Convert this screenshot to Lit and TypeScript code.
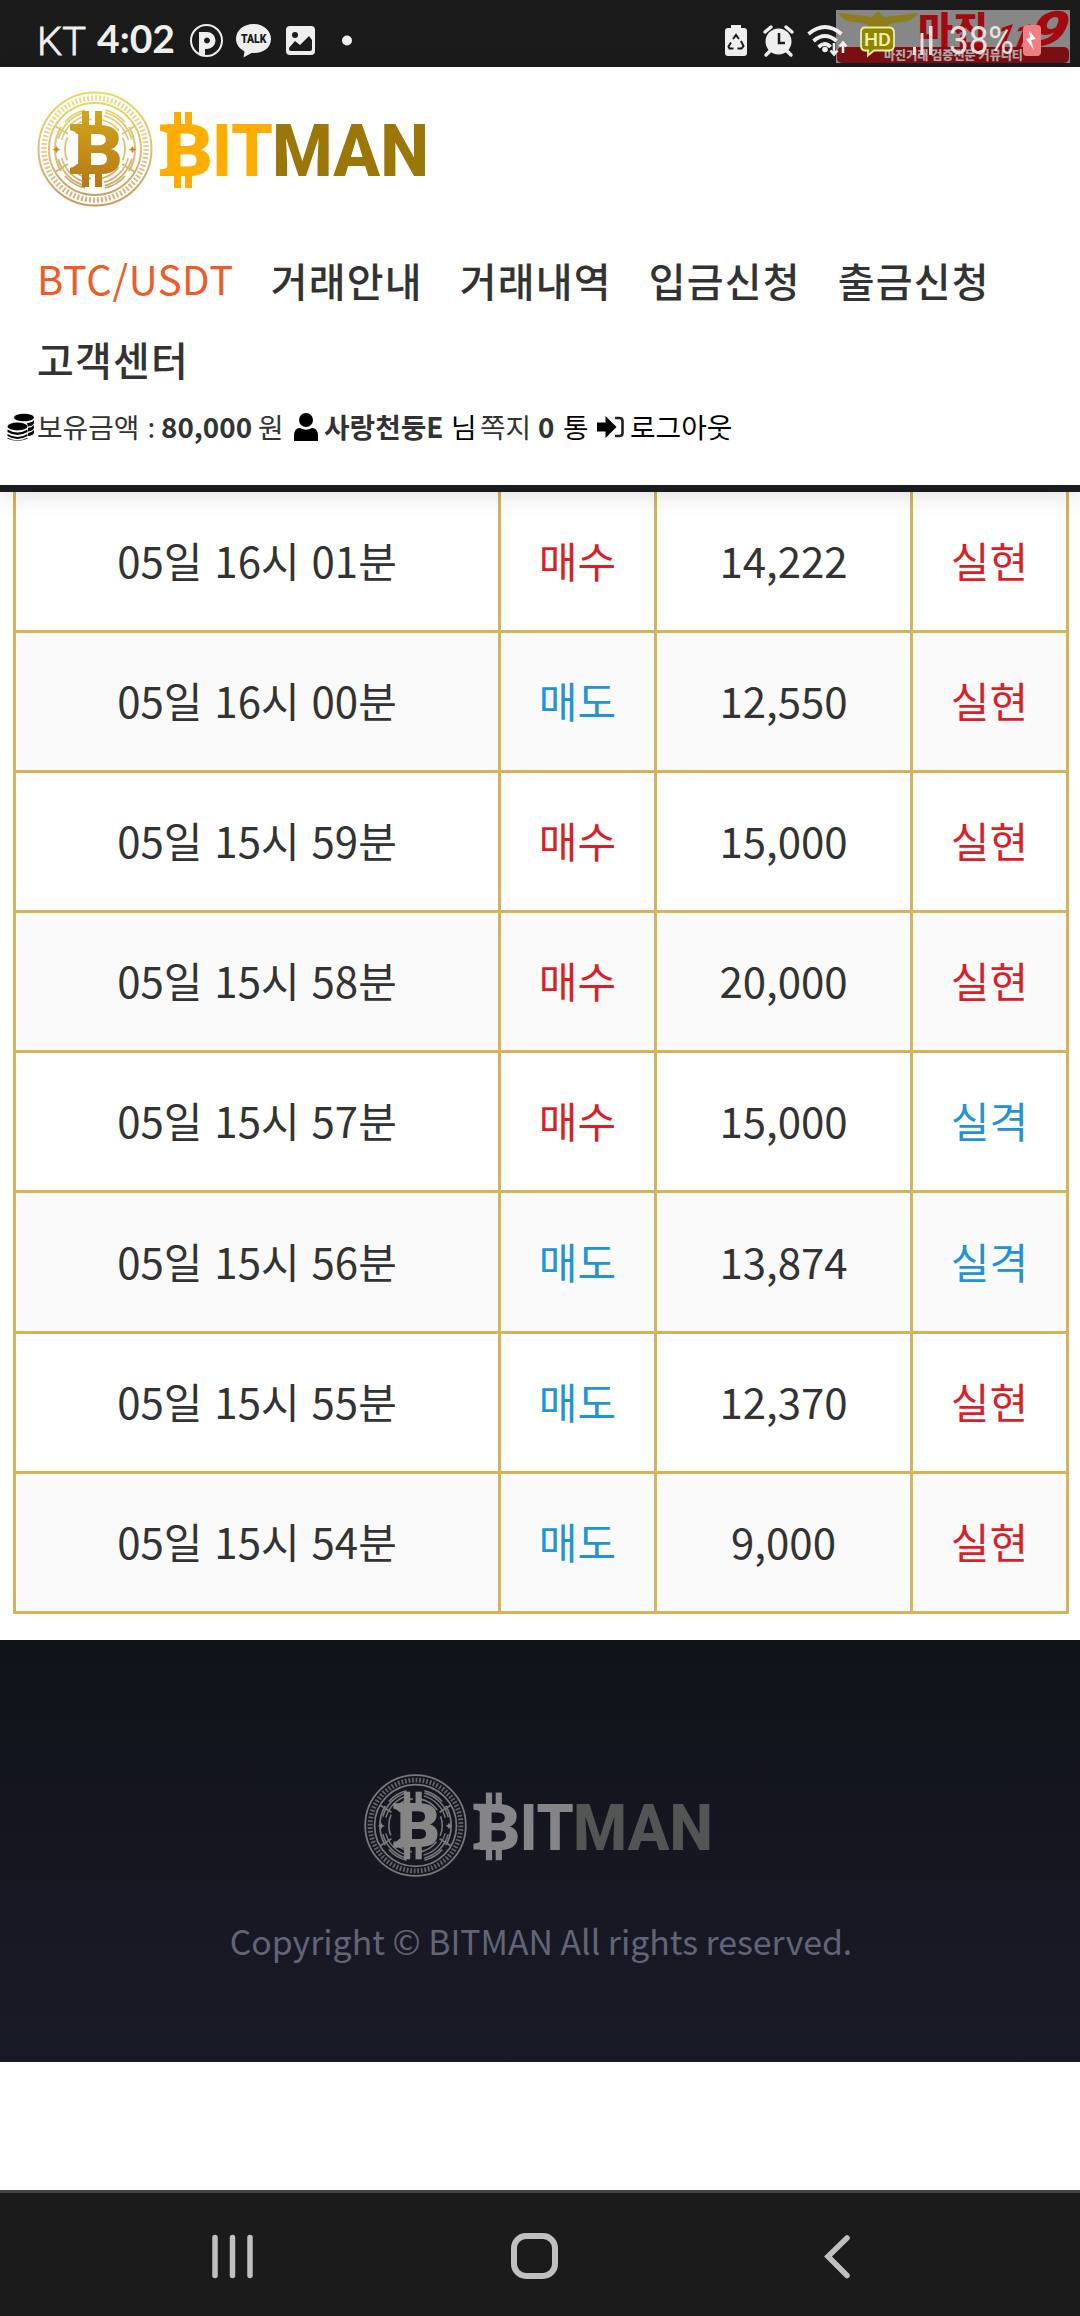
import { LitElement, css, html, svg } from "lit";
import { customElement, property } from "lit/decorators.js";
import { classMap } from "lit/directives/class-map.js";

interface Trade {
    time: string;
    side: "매수" | "매도";
    amount: string;
    result: "실현" | "실격";
}

const TRADES: Trade[] = [
    { time: "05일 16시 01분", side: "매수", amount: "14,222", result: "실현" },
    { time: "05일 16시 00분", side: "매도", amount: "12,550", result: "실현" },
    { time: "05일 15시 59분", side: "매수", amount: "15,000", result: "실현" },
    { time: "05일 15시 58분", side: "매수", amount: "20,000", result: "실현" },
    { time: "05일 15시 57분", side: "매수", amount: "15,000", result: "실격" },
    { time: "05일 15시 56분", side: "매도", amount: "13,874", result: "실격" },
    { time: "05일 15시 55분", side: "매도", amount: "12,370", result: "실현" },
    { time: "05일 15시 54분", side: "매도", amount: "9,000", result: "실현" },
];

const MENU = ["BTC/USDT", "거래안내", "거래내역", "입금신청", "출금신청", "고객센터"];

@customElement("bitman-logo")
class BitmanLogo extends LitElement {
    static styles = css`
    :host {
        display: block;
    }

    svg {
        display: block;
        width: 100%;
        height: 100%;
        overflow: visible;
    }

    text {
        font-family: Roboto, "Liberation Sans", sans-serif;
        font-weight: 900;
    }

    .word {
        font-weight: 800;
    }
    `;

    @property({ type: Boolean }) muted = false;

    render() {
        const coin = this.muted ? "#858586" : "url(#gold)";
        const ring = this.muted ? "#77787a" : "url(#ring)";
        const bit = this.muted ? "#858588" : "#ffae00";
        const man = this.muted ? "#535454" : "#9b7608";
        return html`
        <svg viewBox="0 0 392 120">
            <defs>
                <linearGradient id="gold" gradientUnits="userSpaceOnUse" x1="0" y1="20" x2="0" y2="100">
                    <stop offset="0" stop-color="#d0a91c"/>
                    <stop offset="1" stop-color="#b87516"/>
                </linearGradient>
                <linearGradient id="ring" gradientUnits="userSpaceOnUse" x1="0" y1="0" x2="0" y2="120">
                    <stop offset="0" stop-color="#e9dc62"/>
                    <stop offset="0.5" stop-color="#dcbf7c"/>
                    <stop offset="1" stop-color="#c8985a"/>
                </linearGradient>
            </defs>
            <g fill="none" stroke=${ring}>
                <circle cx="59" cy="60" r="56.5" stroke-width="2"/>
                <circle cx="59" cy="60" r="51" stroke-width="5.500" stroke-dasharray="2 2" opacity="0.8"/>
                <circle cx="59" cy="60" r="46" stroke-width="2"/>
                <circle cx="59" cy="60" r="38" stroke-width="1.8" stroke-dasharray="39.8 19.9" stroke-dashoffset="-9.9"/>
                <circle cx="59" cy="60" r="34.5" stroke-width="1.6" stroke-dasharray="36.1 18.1" stroke-dashoffset="-9"/>
                <circle cx="59" cy="60" r="30" stroke-width="1.8" stroke-dasharray="23.6 7.8" stroke-dashoffset="11.8"/>
                <path d="M19 37l13 8M19 83l13-8M99 37l-13 8M99 83l-13-8M25 38c-8 13-8 31 0 44M93 38c8 13 8 31 0 44" stroke-width="2"/>
                <path d="M49 21c-8 2-15 6-20 12M69 21c8 2 15 6 20 12M49 99c-8-2-15-6-20-12M69 99c8-2 15-6 20-12" stroke-width="1.8"/>
            </g>
            <g fill=${coin}>
                <path d="M20.500 57l1.500 2.500 2.500 1-2.500 1-1.500 2.500-1.500-2.500-2.500-1 2.500-1zM96.500 57l1.500 2.500 2.500 1-2.500 1-1.500 2.500-1.500-2.500-2.500-1 2.500-1z"/>
                <rect x="46" y="22" width="7" height="18"/>
                <rect x="59" y="22" width="7" height="18"/>
                <rect x="46" y="80" width="7" height="18"/>
                <rect x="59" y="80" width="7" height="18"/>
                <path d="M34 35h16v10h-9q-4-4-7-4zM34 85h16v-10h-9q-4 4-7 4z"/>
                <text x="38" y="84.500" font-size="69" textLength="49" lengthAdjust="spacingAndGlyphs">B</text>
            </g>
            <g fill=${bit}>
                <rect x="138" y="23" width="7" height="16"/>
                <rect x="149" y="23" width="7" height="16"/>
                <rect x="138" y="83" width="7" height="16"/>
                <rect x="149" y="83" width="7" height="16"/>
                <path d="M124 35.500h16v9h-8q-3-2-8-2.500zM124 87h16v-9h-8q-3 2-8 2.500z"/>
                <text x="127" y="87" font-size="72.500" textLength="50" lengthAdjust="spacingAndGlyphs">B</text>
                <text class="word" x="176" y="87" font-size="72.500" textLength="61" lengthAdjust="spacingAndGlyphs">IT</text>
            </g>
            <text class="word" fill=${man} x="236" y="87" font-size="72.500" textLength="157" lengthAdjust="spacingAndGlyphs">MAN</text>
        </svg>
    `;
    }
}

@customElement("status-bar")
class StatusBar extends LitElement {
    static styles = css`
    :host {
        display: block;
        position: relative;
        height: 67px;
        background: #1b1b1b;
    }

    svg {
        display: block;
    }

    .watermark {
        position: absolute;
        left: 836px;
        top: 10px;
        overflow: visible;
    }

    .latin {
        font-family: Roboto, "Liberation Sans", sans-serif;
    }

    .clock {
        font-family: Lato, sans-serif;
        font-weight: 700;
    }

    .korean {
        font-family: "Noto Sans CJK KR", sans-serif;
        font-weight: 900;
    }
    `;

    systemIcons() {
        return svg`
        <g fill="#efefef">
            <path d="M728 28h3v-3h10v3h3q3 0 3 3v22q0 3-3 3h-16q-3 0-3-3v-22q0-3 3-3z"/>
            <g fill="none" stroke="#1b1b1b" stroke-width="2">
                <path d="M733 39l3-4 3 4M741 41l2.500 5-2 2.500h-4M733.500 48.500h-4l-1-2 2.500-4"/>
            </g>
            <circle cx="778.500" cy="41.500" r="13"/>
            <path d="M770 51l-4 4M787 51l4 4M765 32l6-5M792 32l-6-5" stroke="#efefef" stroke-width="3.500" stroke-linecap="round"/>
            <path d="M779 33v10h6" fill="none" stroke="#1b1b1b" stroke-width="2.500"/>
        </g>
        `;
    }

    coveredIcons() {
        return svg`
        <g transform="translate(-836 -10)">
            <g fill="none" stroke="#efefef" stroke-width="3.800">
                <path d="M808.500 34q16.500-14 33 0M813.500 41q11.500-10 23 0M818.500 47q6.500-6 12 0"/>
                <path d="M834 43v10M830.500 50.500l3.500 4 3.500-4M843 53v-9M839.500 46.500l3.500-4 3.500 4" stroke-width="2.600"/>
            </g>
            <circle cx="825" cy="49.500" r="2.800" fill="#efefef"/>
            <path d="M865 27.500h24q5 0 5 5v13q0 5-5 5h-15l-6 5v-5h-3q-4 0-4-5v-13q0-5 4-5z" fill="#8f8500" stroke="#f0eda0" stroke-width="1.800"/>
            <text class="latin" x="864" y="46" font-size="19" font-weight="500" fill="#f4f1b5" textLength="27" lengthAdjust="spacingAndGlyphs">HD</text>
            <g fill="#e9dede">
                <rect x="913" y="47" width="3" height="8"/>
                <rect x="920.500" y="33" width="3" height="22"/>
                <rect x="929" y="26" width="3.500" height="29"/>
            </g>
            <text class="latin" x="949" y="54" font-size="39" fill="#f5eeee" opacity="0.9" textLength="65" lengthAdjust="spacingAndGlyphs">38%</text>
            <rect x="1023" y="25" width="18" height="31" rx="4" fill="#f07f84"/>
            <path d="M1029 31l7 8-5 1 3 10-8-11 4-1z" fill="#fff"/>
        </g>
        `;
    }

    render() {
        return html`
        <svg width="1080" height="67" viewBox="0 0 1080 67">
            <g fill="#efefef">
                <text class="latin" x="37" y="54.500" font-size="39" font-weight="300" stroke="#efefef" stroke-width="0.800" textLength="49" lengthAdjust="spacingAndGlyphs">KT</text>
                <text class="clock" x="97" y="53" font-size="38" textLength="78" lengthAdjust="spacingAndGlyphs">4:02</text>
                <circle cx="206.500" cy="40.500" r="15.500" fill="none" stroke="#efefef" stroke-width="2"/>
                <path fill-rule="evenodd" d="M199 32h8a8 8 0 0 1 0 17h-2v7l-6-2zM207 37.500a3 3 0 1 0 .01 0z"/>
                <path d="M253.500 24c10 0 17.500 6.500 17.500 15s-7.500 14-16.500 14h-3l-8 4.500 1-6c-5-3-8.500-7-8.500-12.500 0-8.500 7.500-15 17.500-15z"/>
                <text class="latin" x="241" y="43" font-size="12.500" font-weight="900" fill="#1b1b1b" textLength="25.500" lengthAdjust="spacingAndGlyphs">TALK</text>
                <rect x="286" y="26" width="29" height="29" rx="4"/>
                <g fill="#1b1b1b">
                    <circle cx="295" cy="35" r="3"/>
                    <path d="M289 48l6-7 5 4 9-9 3 4v9q0 2-2 2h-19q-2 0-2-2z"/>
                </g>
                <circle cx="347" cy="40.500" r="5"/>
            </g>
            ${this.systemIcons()}
        </svg>
        <svg class="watermark" width="234" height="53" viewBox="0 0 234 53">
            <rect width="234" height="53" fill="#878787"/>
            <g fill="#8d7d1c">
                <path d="M2 3l28 3 6 1 6-6 6 6 34-4c-4 6-10 9-17 9l-12 2-3 6h-16l-3-6-12-2c-8 0-13-3-17-9z"/>
            </g>
            <rect x="1" y="37" width="232" height="16" rx="5" fill="#7c0f13"/>
            <g fill="#a3090f">
                <text class="korean" x="82" y="34" font-size="37" textLength="70" lengthAdjust="spacingAndGlyphs">마진</text>
                <g transform="translate(156 37) skewX(-22)">
                    <text class="latin" x="0" y="0" font-size="32" font-weight="900" textLength="34" lengthAdjust="spacingAndGlyphs">11</text>
                    <text class="latin" x="33" y="-1" font-size="49" font-weight="900" textLength="36" lengthAdjust="spacingAndGlyphs">9</text>
                </g>
            </g>
            <text class="korean" x="48" y="49.500" font-size="12" fill="#b5a8a8" textLength="139" lengthAdjust="spacingAndGlyphs">마진거래 검증전문 커뮤니티</text>
            ${this.coveredIcons()}
        </svg>
    `;
    }
}

@customElement("app-root")
class AppRoot extends LitElement {
    static styles = css`
    :host {
        display: flex;
        flex-direction: column;
        height: 2316px;
        background: #fff;
        color: #333;
        font-family: "Noto Sans CJK KR", sans-serif;
        overflow: hidden;
    }

    header {
        position: relative;
        box-sizing: border-box;
        height: 425px;
        padding-top: 22px;
        background: #fff;
        border-bottom: 7px solid #1b1c20;
        box-shadow: 0 4px 24px rgba(0, 0, 0, 0.12);
    }

    .logo {
        width: 392px;
        height: 120px;
        margin-left: 36px;
    }

    .menu {
        display: flex;
        flex-wrap: wrap;
        column-gap: 37px;
        padding: 32px 37px 0;
    }

    .menu a {
        font-size: 40px;
        line-height: 79px;
        font-weight: 500;
        letter-spacing: 1.2px;
        white-space: nowrap;
    }

    .menu a.active {
        color: #f15a24;
        font-weight: 400;
        letter-spacing: 0.6px;
        line-height: 75px;
    }

    .account {
        display: flex;
        align-items: center;
        height: 40px;
        padding: 7px 0 0 7px;
        font-size: 27.8px;
        line-height: 40px;
        white-space: pre;
    }

    .account svg {
        margin-top: 2px;
    }

    .account .dark {
        color: #000;
    }

    .account b {
        font-weight: 700;
    }

    .held { width: 124px; margin-left: 2px; word-spacing: 2px; }
    .money { width: 97px; }
    .won { width: 36px; }
    .user { width: 127px; margin-left: 6px; }
    .nim { width: 29px; }
    .note { width: 58px; }
    .count { width: 25px; }
    .mail { width: 34px; }
    .logout { margin-left: 6px; }

    .trades {
        display: grid;
        grid-template-columns: 485px 156px 256px 156px;
        grid-template-rows: 141px repeat(4, 140px) 141px repeat(2, 140px);
        width: 1053px;
        margin: 0 0 26px 13px;
        border-left: 3px solid #d4b456;
    }

    .cell {
        box-sizing: border-box;
        display: flex;
        align-items: center;
        justify-content: center;
        padding-bottom: 4px;
        border-right: 3px solid #d4b456;
        border-bottom: 3px solid #d4b456;
        font-size: 42px;
        word-spacing: 2.5px;
        white-space: pre;
    }

    .even {
        background: #fafafa;
    }

    .red {
        color: #da1f28;
    }

    .blue {
        color: #2493d6;
    }

    footer {
        box-sizing: border-box;
        display: flex;
        flex-direction: column;
        align-items: center;
        height: 422px;
        padding-top: 132px;
        background: linear-gradient(#11131a, #191a27);
    }

    .footer-logo {
        width: 349px;
        height: 107px;
        margin-right: 6px;
    }

    .copyright {
        margin-top: 37px;
        padding-left: 2px;
        font-size: 33.8px;
        line-height: 50px;
        color: #626478;
        white-space: nowrap;
    }

    .nav {
        display: flex;
        justify-content: center;
        box-sizing: border-box;
        height: 126px;
        margin-top: auto;
        border-top: 3px solid #444;
        background: #1b1b1b;
    }
    `;

    renderMenu() {
        return MENU.map(
            (item, i) => html`<a class=${classMap({ active: i === 0 })}>${item}</a>`
        );
    }

    renderTrade(trade: Trade, i: number) {
        const even = i % 2 === 1;
        return html`
        <div class=${classMap({ cell: true, even })}>${trade.time}</div>
        <div class=${classMap({ cell: true, even, red: trade.side === "매수", blue: trade.side === "매도" })}>${trade.side}</div>
        <div class=${classMap({ cell: true, even })}>${trade.amount}</div>
        <div class=${classMap({ cell: true, even, red: trade.result === "실현", blue: trade.result === "실격" })}>${trade.result}</div>
        `;
    }

    render() {
        return html`
        <status-bar></status-bar>
        <header>
            <bitman-logo class="logo"></bitman-logo>
            <nav class="menu">${this.renderMenu()}</nav>
            <div class="account">
                <svg width="28" height="28" viewBox="0 0 28 28">
                    <ellipse cx="17" cy="4.500" rx="10" ry="3.800"/>
                    <path d="M20 10q5-.500 7-3v3q-1 3-6 3.500zM21 15q4-.500 6-3v3q-1 3-6 3.500zM21 20q4-.500 6-3v3q-1 2.500-6 3z"/>
                    <ellipse cx="10.500" cy="13.500" rx="10" ry="3.900"/>
                    <path d="M.500 16.500q10 6 20 0v2.500q-10 6-20 0zM.500 21q10 6 20 0v2q-10 6-20 0zM.500 24.800q10 5 20 0v1q-10 4-20 0z"/>
                </svg>
                <span class="held">보유금액 :</span>
                <b class="money">80,000</b>
                <span class="won">원</span>
                <svg width="24" height="28" viewBox="0 0 24 28">
                    <circle cx="12" cy="7" r="7"/>
                    <path d="M0 28v-5q0-8 6-8 6 3.500 12 0 6 0 6 8v5z"/>
                </svg>
                <b class="user">사랑천둥E</b>
                <span class="nim dark">님</span>
                <span class="note">쪽지</span>
                <b class="count">0</b>
                <span class="mail dark">통</span>
                <svg width="27" height="24" viewBox="0 0 27 24">
                    <path d="M0 7.500h8.500v-6.500l11 11-11 11v-6.500h-8.500z"/>
                    <path d="M18 3h4.500q3 0 3 3v12q0 3-3 3h-4.500" fill="none" stroke="#222" stroke-width="2.600"/>
                </svg>
                <span class="logout dark">로그아웃</span>
            </div>
        </header>
        <main class="trades">${TRADES.map((t, i) => this.renderTrade(t, i))}</main>
        <footer>
            <bitman-logo class="footer-logo" muted></bitman-logo>
            <div class="copyright">Copyright © BITMAN All rights reserved.</div>
        </footer>
        <div class="nav">
            <svg width="1080" height="123" viewBox="0 2193 1080 123" fill="none" stroke="#c0c0c0">
                <path d="M215 2237.500v38M232.500 2237.500v38M250 2237.500v38" stroke-width="5.500" stroke-linecap="round"/>
                <rect x="514" y="2236" width="41" height="40" rx="12" stroke-width="6"/>
                <path d="M847 2238l-19 18.500 19 19" stroke-width="5.500" stroke-linecap="round"/>
            </svg>
        </div>
    `;
    }
}
